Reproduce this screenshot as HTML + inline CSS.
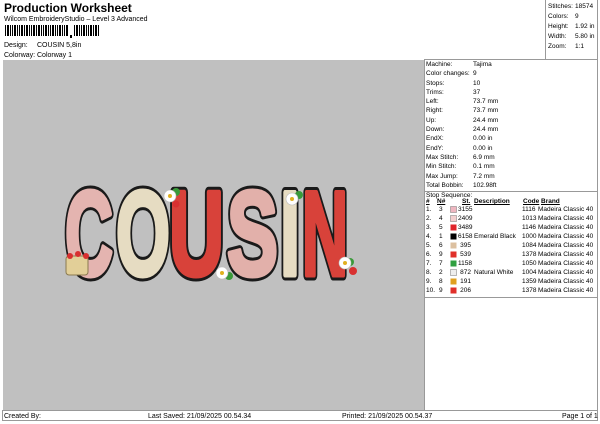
<!DOCTYPE html>
<html><head><meta charset="utf-8"><style>
*{margin:0;padding:0;box-sizing:border-box}
body{width:600px;height:424px;background:#fff;font-family:"Liberation Sans",Arial,sans-serif;position:relative;overflow:hidden;color:#000}
.a{position:absolute;white-space:nowrap;font-size:7px;line-height:9px}
.r{position:absolute;font-size:6.5px;line-height:9.3px;white-space:nowrap}
</style></head><body>
<div class="a" style="left:4px;top:1px;font-size:12px;font-weight:bold;line-height:14px">Production Worksheet</div>
<div class="a" style="left:4px;top:15px">Wilcom EmbroideryStudio – Level 3 Advanced</div>
<svg style="position:absolute;left:5px;top:25px" width="100" height="14">
<g fill="#000">
<rect x="0" y="0" width="1" height="11"/><rect x="2" y="0" width="2" height="11"/><rect x="5" y="0" width="1" height="11"/><rect x="7" y="0" width="1" height="11"/><rect x="9" y="0" width="2" height="11"/><rect x="12" y="0" width="1" height="11"/><rect x="14" y="0" width="1" height="11"/><rect x="16" y="0" width="2" height="11"/><rect x="19" y="0" width="1" height="11"/><rect x="21" y="0" width="2" height="11"/><rect x="24" y="0" width="1" height="11"/><rect x="26" y="0" width="1" height="11"/><rect x="28" y="0" width="2" height="11"/><rect x="31" y="0" width="1" height="11"/><rect x="33" y="0" width="2" height="11"/><rect x="36" y="0" width="1" height="11"/><rect x="38" y="0" width="1" height="11"/><rect x="40" y="0" width="2" height="11"/><rect x="43" y="0" width="1" height="11"/><rect x="45" y="0" width="1" height="11"/><rect x="47" y="0" width="2" height="11"/><rect x="50" y="0" width="1" height="11"/><rect x="52" y="0" width="1" height="11"/><rect x="54" y="0" width="2" height="11"/><rect x="57" y="0" width="1" height="11"/><rect x="59" y="0" width="1" height="11"/><rect x="61" y="0" width="2" height="11"/>
<rect x="65" y="10" width="2" height="3"/>
<rect x="69" y="0" width="1" height="11"/><rect x="71" y="0" width="2" height="11"/><rect x="74" y="0" width="1" height="11"/><rect x="76" y="0" width="1" height="11"/><rect x="78" y="0" width="2" height="11"/><rect x="81" y="0" width="1" height="11"/><rect x="83" y="0" width="1" height="11"/><rect x="85" y="0" width="2" height="11"/><rect x="88" y="0" width="1" height="11"/><rect x="90" y="0" width="2" height="11"/><rect x="93" y="0" width="1" height="11"/>
</g></svg>
<div class="a" style="left:4px;top:41px">Design:</div><div class="a" style="left:37px;top:41px">COUSIN 5,8in</div>
<div class="a" style="left:4px;top:51px">Colorway:</div><div class="a" style="left:37px;top:51px">Colorway 1</div>

<div style="position:absolute;left:545px;top:0;width:1px;height:59px;background:#999"></div>
<div style="position:absolute;left:597px;top:0;width:1px;height:410px;background:#999"></div>
<div style="position:absolute;left:424px;top:59px;width:174px;height:1px;background:#999"></div>
<div class="r" style="left:548px;top:2px;line-height:10px">Stitches:<br>Colors:<br>Height:<br>Width:<br>Zoom:</div>
<div class="r" style="left:575px;top:2px;line-height:10px">18574<br>9<br>1.92 in<br>5.80 in<br>1:1</div>

<div style="position:absolute;left:3px;top:60px;width:421px;height:350px;background:#c0c0c0"></div>
<div style="position:absolute;left:424px;top:60px;width:1px;height:350px;background:#999"></div>

<div class="r" style="left:426px;top:60px">Machine:<br>Color changes:<br>Stops:<br>Trims:<br>Left:<br>Right:<br>Up:<br>Down:<br>EndX:<br>EndY:<br>Max Stitch:<br>Min Stitch:<br>Max Jump:<br>Total Bobbin:</div>
<div class="r" style="left:473px;top:60px">Tajima<br>9<br>10<br>37<br>73.7 mm<br>73.7 mm<br>24.4 mm<br>24.4 mm<br>0.00 in<br>0.00 in<br>6.9 mm<br>0.1 mm<br>7.2 mm<br>102.98ft</div>
<div style="position:absolute;left:424px;top:191px;width:174px;height:1px;background:#999"></div>
<div class="r" style="left:426px;top:191px;line-height:9px">Stop Sequence:</div>
<div class="r" style="left:426px;top:198px;font-weight:bold;line-height:8px">
<span style="position:absolute;left:0;top:0;text-decoration:underline">#</span><span style="position:absolute;left:11px;top:0;text-decoration:underline">N#</span><span style="position:absolute;left:36px;top:0;text-decoration:underline">St.</span><span style="position:absolute;left:48px;top:0;text-decoration:underline">Description</span><span style="position:absolute;left:97px;top:0;text-decoration:underline">Code</span><span style="position:absolute;left:115px;top:0;text-decoration:underline">Brand</span></div>
<div class="r" style="left:426px;top:205px;line-height:9px">1.<br>2.<br>3.<br>4.<br>5.<br>6.<br>7.<br>8.<br>9.<br>10.</div>
<div class="r" style="left:439px;top:205px;line-height:9px">3<br>4<br>5<br>1<br>6<br>9<br>7<br>2<br>8<br>9</div>
<svg style="position:absolute;left:450px;top:205px" width="8" height="90">
<rect x="0.5" y="1.5" width="6" height="6" fill="#eeb6c0" stroke="#777" stroke-width=".5"/>
<rect x="0.5" y="10.5" width="6" height="6" fill="#f2cfcf" stroke="#777" stroke-width=".5"/>
<rect x="0.5" y="19.5" width="6" height="6" fill="#e0242a"/>
<rect x="0.5" y="28.5" width="6" height="6" fill="#000"/>
<rect x="0.5" y="37.5" width="6" height="6" fill="#dcc0a0"/>
<rect x="0.5" y="46.5" width="6" height="6" fill="#e0302a"/>
<rect x="0.5" y="55.5" width="6" height="6" fill="#30a040"/>
<rect x="0.5" y="64.5" width="6" height="6" fill="#eee" stroke="#777" stroke-width=".5"/>
<rect x="0.5" y="73.5" width="6" height="6" fill="#e0a020"/>
<rect x="0.5" y="82.5" width="6" height="6" fill="#e0302a"/>
</svg>
<div class="r" style="left:458px;top:205px;line-height:9px;text-align:right;width:13px">3155<br>2409<br>3489<br>6158<br>395<br>539<br>1158<br>872<br>191<br>206</div>
<div class="r" style="left:474px;top:205px;line-height:9px"><br><br><br>Emerald Black<br><br><br><br>Natural White</div>
<div class="r" style="left:522px;top:205px;line-height:9px">1116<br>1013<br>1146<br>1000<br>1084<br>1378<br>1050<br>1004<br>1359<br>1378</div>
<div class="r" style="left:538px;top:205px;line-height:9px">Madeira Classic 40<br>Madeira Classic 40<br>Madeira Classic 40<br>Madeira Classic 40<br>Madeira Classic 40<br>Madeira Classic 40<br>Madeira Classic 40<br>Madeira Classic 40<br>Madeira Classic 40<br>Madeira Classic 40</div>
<div style="position:absolute;left:424px;top:297px;width:174px;height:1px;background:#999"></div>

<div style="position:absolute;left:2px;top:410px;width:596px;height:11px;border:1px solid #999"></div>
<div class="a" style="left:4px;top:412px">Created By:</div>
<div class="a" style="left:148px;top:412px">Last Saved: 21/09/2025 00.54.34</div>
<div class="a" style="left:342px;top:412px">Printed: 21/09/2025 00.54.37</div>
<div class="a" style="left:562px;top:412px">Page 1 of 1</div>

<svg style="position:absolute;left:0;top:0" width="424" height="410">
<g font-family="Liberation Sans" font-weight="bold" font-size="120" stroke="#1a1a1a" stroke-width="11" stroke-linejoin="round">
<text x="65" y="275" textLength="48" lengthAdjust="spacingAndGlyphs">C</text>
<text x="116" y="275" textLength="54" lengthAdjust="spacingAndGlyphs">O</text>
<text x="169" y="275" textLength="55" lengthAdjust="spacingAndGlyphs">U</text>
<text x="227" y="275" textLength="51" lengthAdjust="spacingAndGlyphs">S</text>
<text x="280" y="275" textLength="20" lengthAdjust="spacingAndGlyphs">I</text>
<text x="302" y="275" textLength="46" lengthAdjust="spacingAndGlyphs">N</text>
</g>
<g font-family="Liberation Sans" font-weight="bold" font-size="120" stroke-width="5" stroke-linejoin="round">
<text x="65" y="275" textLength="48" lengthAdjust="spacingAndGlyphs" fill="#e4b4b0" stroke="#e4b4b0">C</text>
<text x="116" y="275" textLength="54" lengthAdjust="spacingAndGlyphs" fill="#e6dcc2" stroke="#e6dcc2">O</text>
<text x="169" y="275" textLength="55" lengthAdjust="spacingAndGlyphs" fill="#d8423a" stroke="#d8423a">U</text>
<text x="227" y="275" textLength="51" lengthAdjust="spacingAndGlyphs" fill="#e2b0aa" stroke="#e2b0aa">S</text>
<text x="280" y="275" textLength="20" lengthAdjust="spacingAndGlyphs" fill="#e6dcc2" stroke="#e6dcc2">I</text>
<text x="302" y="275" textLength="46" lengthAdjust="spacingAndGlyphs" fill="#d8423a" stroke="#d8423a">N</text>
</g>
<g>
<rect x="66" y="256" width="22" height="19" rx="3" fill="#e2cf98" stroke="#8a7a50"/>
<circle cx="70" cy="256" r="3" fill="#d83030"/><circle cx="78" cy="254" r="3" fill="#d83030"/><circle cx="86" cy="256" r="3" fill="#d83030"/>
<g fill="#3a9a3a"><circle cx="176" cy="192" r="4"/><circle cx="229" cy="276" r="4"/><circle cx="299" cy="195" r="4"/><circle cx="350" cy="262" r="4"/></g>
<g fill="#fff" stroke="#bbb" stroke-width=".6">
<circle cx="170" cy="196" r="6"/><circle cx="222" cy="273" r="6"/><circle cx="292" cy="199" r="6"/><circle cx="345" cy="263" r="6"/></g>
<g fill="#e0b020"><circle cx="170" cy="196" r="2"/><circle cx="222" cy="273" r="2"/><circle cx="292" cy="199" r="2"/><circle cx="345" cy="263" r="2"/></g>
<circle cx="176" cy="204" r="3.5" fill="#d83030"/><circle cx="353" cy="271" r="4" fill="#d83030"/>
</g>
</svg>
</body></html>
